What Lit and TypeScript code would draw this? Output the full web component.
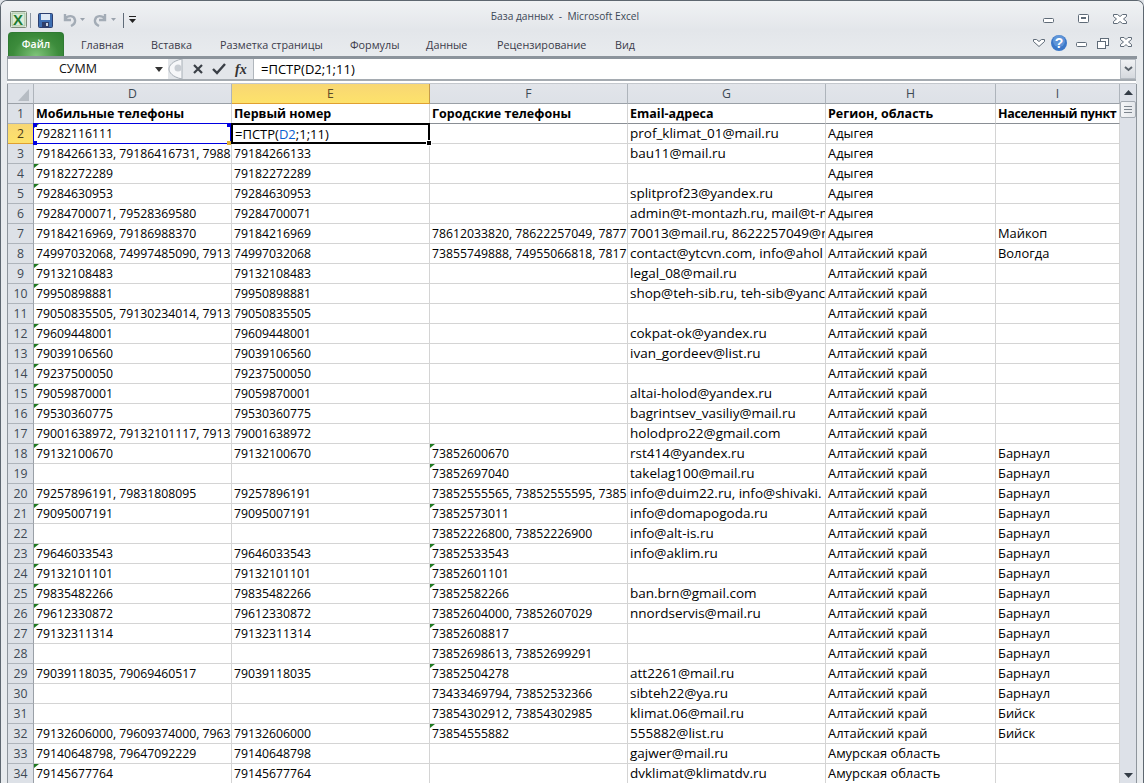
import { LitElement, html, css } from "lit";
import { customElement } from "lit/decorators.js";

type Row = { n: number; d?: string; e?: string; f?: string; g?: string; h?: string; i?: string; td?: boolean; tf?: boolean };
const A = "Адыгея", K = "Алтайский край", M = "Амурская область", B = "Барнаул";
const rows: Row[] = [
  { n: 2, d: "79282116111", td: true, g: "prof_klimat_01@mail.ru", h: A },
  { n: 3, d: "79184266133, 79186416731, 7988", e: "79184266133", g: "bau11@mail.ru", h: A },
  { n: 4, d: "79182272289", td: true, e: "79182272289", h: A },
  { n: 5, d: "79284630953", td: true, e: "79284630953", g: "splitprof23@yandex.ru", h: A },
  { n: 6, d: "79284700071, 79528369580", e: "79284700071", g: "admin@t-montazh.ru, mail@t-m", h: A },
  { n: 7, d: "79184216969, 79186988370", e: "79184216969", f: "78612033820, 78622257049, 7877", g: "70013@mail.ru, 8622257049@m", h: A, i: "Майкоп" },
  { n: 8, d: "74997032068, 74997485090, 7913", e: "74997032068", f: "73855749888, 74955066818, 7817", g: "contact@ytcvn.com, info@ahol", h: K, i: "Вологда" },
  { n: 9, d: "79132108483", td: true, e: "79132108483", g: "legal_08@mail.ru", h: K },
  { n: 10, d: "79950898881", td: true, e: "79950898881", g: "shop@teh-sib.ru, teh-sib@yanc", h: K },
  { n: 11, d: "79050835505, 79130234014, 7913", e: "79050835505", h: K },
  { n: 12, d: "79609448001", td: true, e: "79609448001", g: "cokpat-ok@yandex.ru", h: K },
  { n: 13, d: "79039106560", td: true, e: "79039106560", g: "ivan_gordeev@list.ru", h: K },
  { n: 14, d: "79237500050", td: true, e: "79237500050", h: K },
  { n: 15, d: "79059870001", td: true, e: "79059870001", g: "altai-holod@yandex.ru", h: K },
  { n: 16, d: "79530360775", td: true, e: "79530360775", g: "bagrintsev_vasiliy@mail.ru", h: K },
  { n: 17, d: "79001638972, 79132101117, 7913", e: "79001638972", g: "holodpro22@gmail.com", h: K },
  { n: 18, d: "79132100670", td: true, e: "79132100670", f: "73852600670", tf: true, g: "rst414@yandex.ru", h: K, i: B },
  { n: 19, f: "73852697040", tf: true, g: "takelag100@mail.ru", h: K, i: B },
  { n: 20, d: "79257896191, 79831808095", e: "79257896191", f: "73852555565, 73852555595, 7385", g: "info@duim22.ru, info@shivaki.", h: K, i: B },
  { n: 21, d: "79095007191", td: true, e: "79095007191", f: "73852573011", tf: true, g: "info@domapogoda.ru", h: K, i: B },
  { n: 22, f: "73852226800, 73852226900", g: "info@alt-is.ru", h: K, i: B },
  { n: 23, d: "79646033543", td: true, e: "79646033543", f: "73852533543", tf: true, g: "info@aklim.ru", h: K, i: B },
  { n: 24, d: "79132101101", td: true, e: "79132101101", f: "73852601101", tf: true, h: K, i: B },
  { n: 25, d: "79835482266", td: true, e: "79835482266", f: "73852582266", tf: true, g: "ban.brn@gmail.com", h: K, i: B },
  { n: 26, d: "79612330872", td: true, e: "79612330872", f: "73852604000, 73852607029", g: "nnordservis@mail.ru", h: K, i: B },
  { n: 27, d: "79132311314", td: true, e: "79132311314", f: "73852608817", tf: true, h: K, i: B },
  { n: 28, f: "73852698613, 73852699291", h: K, i: B },
  { n: 29, d: "79039118035, 79069460517", e: "79039118035", f: "73852504278", tf: true, g: "att2261@mail.ru", h: K, i: B },
  { n: 30, f: "73433469794, 73852532366", g: "sibteh22@ya.ru", h: K, i: B },
  { n: 31, f: "73854302912, 73854302985", g: "klimat.06@mail.ru", h: K, i: "Бийск" },
  { n: 32, d: "79132606000, 79609374000, 7963", e: "79132606000", f: "73854555882", tf: true, g: "555882@list.ru", h: K, i: "Бийск" },
  { n: 33, d: "79140648798, 79647092229", e: "79140648798", g: "gajwer@mail.ru", h: M },
  { n: 34, d: "79145677764", td: true, e: "79145677764", g: "dvklimat@klimatdv.ru", h: M },
];

const tabs = ["Главная", "Вставка", "Разметка страницы", "Формулы", "Данные", "Рецензирование", "Вид"];
const tabX = [80, 150, 219, 349, 425, 496, 614];
const grey = "#5f6b78";

@customElement("app-root")
class AppRoot extends LitElement {
  static styles = css`
    :host { display: block; width: 1144px; height: 783px; overflow: hidden; font-family: "Open Sans", sans-serif; color: #000; background: #dfe3e8; }
    .win { height: 783px; box-sizing: border-box; display: flex; flex-direction: column; border: 1px solid #5e6770; border-bottom: 0; border-radius: 7px 7px 0 0; background: #e8ebee; overflow: hidden; }
    .title { height: 29px; flex: none; display: flex; align-items: center; padding-left: 8px; position: relative; background: linear-gradient(#f0f2f4, #e3e6ea); }
    .title .t { position: absolute; left: 0; right: 14px; top: 8px; text-align: center; font-size: 10.2px; line-height: 15px; color: #3c4856; white-space: pre; }
    .qat { display: flex; align-items: center; position: relative; height: 24px; margin-top: 9px; }
    .sep { width: 1px; height: 15px; background: #8c97a3; flex: none; }
    .capsvg { position: absolute; left: 1030px; top: 0; }
    .tabs { height: 26px; flex: none; display: flex; align-items: flex-end; position: relative; padding-left: 7px; background: linear-gradient(#e3e6ea, #e8ebee); }
    .file { width: 56px; height: 24px; box-sizing: border-box; background: radial-gradient(ellipse at 50% 100%, #7fc47a, #3d8c3c 60%, #2f7f31); border: 1px solid #2f7a33; border-bottom: 0; border-radius: 4px 4px 0 0; color: #fff; font-weight: 600; font-size: 10.5px; line-height: 23px; text-align: center; }
    .tab { font-size: 10.8px; line-height: 23px; color: #3b3b4a; height: 23px; position: absolute; bottom: 0; white-space: nowrap; }
    .helpsvg { position: absolute; left: 1022px; top: 0; }
    .rib { height: 3px; flex: none; background: #8c949c; margin-left: 6px; margin-right: 6px; }
    .fbar { height: 20px; flex: none; display: flex; align-items: stretch; margin-left: 6px; margin-right: 7px; background: #dde1e6; border-left: 1px solid #a0a6ad; }
    .name { width: 160px; flex: none; background: #fff; position: relative; font-size: 12.5px; line-height: 20px; padding-left: 51px; box-sizing: border-box; color: #111; }
    .name svg { position: absolute; left: 147px; top: 8px; }
    .mid { width: 85px; flex: none; background: #e3e6ea; }
    .mid svg { display: block; }
    .finp { flex: 1; background: #fff; font-size: 13px; line-height: 20px; padding-left: 7px; border-left: 1px solid #b0b6bc; }
    .fdrop { width: 16px; box-sizing: border-box; border: 1px solid #b6bcc3; background: linear-gradient(#f0f2f4, #d5d9de); display: flex; align-items: center; justify-content: center; flex: none; }
    .gap { height: 5px; flex: none; margin-left: 6px; margin-right: 7px; background: #fff; border-top: 2px solid #a5abb1; border-bottom: 1px solid #c4c8cd; box-sizing: border-box; }
    .sheet { flex: 1; min-height: 0; display: flex; margin-left: 6px; margin-right: 6px; border-left: 1px solid #8e959c; border-right: 1px solid #8e959c; position: relative; }
    .grid { width: 1112px; flex: none; display: grid; grid-template-columns: 26px 198px 198px 198px 198px 170px 124px; grid-auto-rows: 20px; align-content: start; background: #fff; overflow: hidden; position: relative; font-size: 12.24px; }
    .c { border-right: 1px solid #d4d4d4; border-bottom: 1px solid #d4d4d4; box-sizing: border-box; overflow: hidden; white-space: nowrap; line-height: 20px; padding-left: 2px; position: relative; }
    .c.t { font-size: 12.9px; line-height: 19px; }
    .c.m { font-size: 13.5px; line-height: 19px; }
    .c.f { font-size: 13px; padding-left: 3px; }
    .c.b { font-weight: 700; font-size: 12.5px; border-bottom: 1px solid #8a8f95; }
    .c.b.n { letter-spacing: -0.35px; }
    .ch { background: linear-gradient(#e2e5ea, #dde1e7); border-right: 1px solid #aeb4bb; border-bottom: 1px solid #9aa0a7; box-sizing: border-box; text-align: center; line-height: 20px; color: #3d4954; font-size: 12.24px; }
    .ch.on { background: linear-gradient(#f8d774, #fde26b); border-bottom-color: #e0a030; border-right-color: #c59b4a; color: #5b4a28; }
    .corner { background: #dde1e7; }
    .corner svg { display: block; }
    .rh { background: #dde1e7; border-right: 1px solid #9aa0a7; border-bottom: 1px solid #aeb4bb; box-sizing: border-box; text-align: center; color: #3d4954; line-height: 20px; font-size: 12.24px; }
    .rh.on { background: linear-gradient(#f8d774, #fde26b); border-bottom-color: #e0a030; border-right-color: #e0a030; color: #4b3b18; }
    .tri { position: absolute; left: 0; top: 0; width: 0; height: 0; border-top: 4px solid #1f7a1f; border-right: 5px solid transparent; }
    .blue { color: #0b5fd0; }
    .sel { position: absolute; left: 223px; top: 39px; width: 199px; height: 21px; box-sizing: border-box; border: 2px solid #000; pointer-events: none; }
    .hand { position: absolute; width: 4px; height: 4px; background: #000; border: 1px solid #fff; right: -4px; bottom: -4px; }
    .rng { position: absolute; left: 25px; top: 39px; width: 198px; height: 21px; box-sizing: border-box; border: 1px solid #0000e0; pointer-events: none; }
    .rng i { position: absolute; width: 4px; height: 4px; background: #0000e0; }
    .rng i.y { background: #e0b030; }
    .scroll { flex: 1; background: #dde1e8; position: relative; display: flex; flex-direction: column; align-items: stretch; }
    .up { height: 17px; flex: none; display: flex; align-items: center; justify-content: center; }
    .thumb { height: 17px; flex: none; border: 1px solid #a4abb3; border-radius: 2px; background: linear-gradient(90deg, #f4f5f7, #e4e7eb); display: flex; align-items: center; justify-content: center; box-sizing: border-box; }
    .dn { position: absolute; bottom: 5px; left: 0; right: 0; display: flex; justify-content: center; line-height: 0; }
  `;

  render() {
    return html`
      <div class="win">
        <div class="title">
          <div class="t">База данных  -  Microsoft Excel</div>
          <div class="qat">
            <svg width="18" height="18" viewBox="0 0 18 18" style="margin:0 2px 0 1px">
              <rect x="0.5" y="0.5" width="16" height="16" rx="1" fill="#fff" stroke="#7a8a78"/>
              <rect x="2" y="2" width="13" height="13" fill="#dcecd8" stroke="#9cbc98"/>
              <text x="3" y="14" font-family="Liberation Sans" font-weight="700" font-size="15" fill="#1d7a2f">X</text>
            </svg>
            <div class="sep" style="margin-right:7px"></div>
            <svg width="15" height="15" viewBox="0 0 15 15" style="margin-right:8px">
              <rect x="0.5" y="0.5" width="14" height="14" rx="1" fill="#3e6fb3" stroke="#2d3f6f"/>
              <rect x="3" y="1" width="9" height="6" fill="#dfe9f5"/>
              <rect x="4" y="9" width="7" height="5" fill="#2f3f6a"/><rect x="8" y="10" width="2" height="3" fill="#cdd6e2"/>
            </svg>
            <svg width="16" height="14" viewBox="0 0 16 14"><path d="M4 1v6h6M4 6c3-4 9-4 10 1 .5 3-2 5-4 6" fill="none" stroke="#a3acb6" stroke-width="2.4"/></svg>
            <svg width="14" height="8" viewBox="0 0 14 8" style="margin:0 4px 0 -2px"><path d="M5 2h5L7.5 5z" fill="#9aa3ad"/></svg>
            <svg width="16" height="14" viewBox="0 0 16 14"><path d="M12 1v6H6M12 6C9 2 3 2 2 7c-.5 3 2 5 4 6" fill="none" stroke="#a3acb6" stroke-width="2.4"/></svg>
            <svg width="14" height="8" viewBox="0 0 14 8" style="margin-left:-3px"><path d="M5 2h5L7.5 5z" fill="#9aa3ad"/></svg>
            <div class="sep" style="margin:0 5px 0 3px;background:#5f6b78"></div>
            <svg width="7" height="8" viewBox="0 0 7 8"><path d="M0 0h7v1H0z" fill="#222"/><path d="M0 3h7L3.5 7z" fill="#222"/></svg>
          </div>
          <svg class="capsvg" width="113" height="29" viewBox="0 0 113 29">
            <rect x="12.5" y="17.5" width="10" height="4" rx="1" fill="#fff" stroke="${grey}"/>
            <rect x="47.5" y="13.5" width="10" height="8" rx="1" fill="#fff" stroke="${grey}"/><rect x="50" y="16" width="5" height="2" fill="${grey}"/>
            <path d="M82.5 13.5h4l2.5 2 2.5-2h4v2l-3 2.5 3 2.5v2h-4l-2.5-2-2.5 2h-4v-2l3-2.5-3-2.5z" fill="#fff" stroke="${grey}"/>
          </svg>
        </div>
        <div class="tabs">
          <div class="file">Файл</div>
          ${tabs.map((t, i) => html`<div class="tab" style="left:${tabX[i]}px">${t}</div>`)}
          <svg class="helpsvg" width="113" height="26" viewBox="0 0 113 26">
            <path d="M10.5 9.5h3l2.5 2 2.5-2h3v2l-5.5 5-5.5-5z" fill="#fff" stroke="${grey}"/>
            <circle cx="36" cy="13" r="8" fill="#3b78c9"/><circle cx="36" cy="11" r="6" fill="#78a9e2" opacity=".6"/>
            <text x="36" y="18" text-anchor="middle" font-family="Liberation Sans" font-weight="700" font-size="14" fill="#fff">?</text>
            <rect x="53.5" y="12.5" width="10" height="4" rx="1" fill="#fff" stroke="${grey}"/>
            <rect x="77.5" y="8.5" width="8" height="7" fill="#fff" stroke="${grey}"/><rect x="74.5" y="11.5" width="8" height="7" fill="#fff" stroke="${grey}"/>
            <path d="M97.5 7.5h3.5l2 2 2-2h3.5v2l-3 2.5 3 2.5v2h-3.5l-2-2-2 2h-3.5v-2l3-2.5-3-2.5z" fill="#fff" stroke="${grey}"/>
          </svg>
        </div>
        <div class="rib"></div>
        <div class="fbar">
          <div class="name">СУММ
            <svg width="9" height="5"><path d="M0 0h8L4 5z" fill="#333"/></svg>
          </div>
          <div class="mid">
            <svg width="85" height="20" viewBox="0 0 85 20">
              <path d="M14 0C4 2 1 7 1 10s3 8 13 10z" fill="#f6f7f9" stroke="#a8afb6"/>
              <circle cx="10" cy="9" r="3.5" fill="#c8cdd3"/>
              <path d="M26 6l8 8M34 6l-8 8" stroke="#3a3f46" stroke-width="2.2"/>
              <path d="M45 10l4 4 8-9" stroke="#3a3f46" stroke-width="2.4" fill="none"/>
              <text x="67" y="15" font-family="Liberation Serif" font-style="italic" font-weight="700" font-size="14" fill="#333">fx</text>
            </svg>
          </div>
          <div class="finp">=ПСТР(D2;1;11)</div>
          <div class="fdrop"><svg width="9" height="6"><path d="M1 1l3.5 3L8 1" fill="none" stroke="#5a626a" stroke-width="2"/></svg></div>
        </div>
        <div class="gap"></div>
        <div class="sheet">
          <div class="grid">
            <div class="ch corner"><svg width="22" height="18"><path d="M21 5v12H10z" fill="#b6bcc3"/></svg></div>
            ${["D", "E", "F", "G", "H", "I"].map((c) => html`<div class="ch ${c === "E" ? "on" : ""}">${c}</div>`)}
            <div class="rh">1</div>
            <div class="c b">Мобильные телефоны</div><div class="c b">Первый номер</div><div class="c b">Городские телефоны</div>
            <div class="c b">Email-адреса</div><div class="c b">Регион, область</div><div class="c b n">Населенный пункт</div>
            ${rows.map((r) => html`
              <div class="rh ${r.n === 2 ? "on" : ""}">${r.n}</div>
              <div class="c">${r.td ? html`<span class="tri"></span>` : ""}${r.d ?? ""}</div>
              ${r.n === 2
                ? html`<div class="c f">=ПСТР(<span class="blue">D2</span>;1;11)</div>`
                : html`<div class="c">${r.e ?? ""}</div>`}
              <div class="c">${r.tf ? html`<span class="tri"></span>` : ""}${r.f ?? ""}</div>
              <div class="c m">${r.g ?? ""}</div>
              <div class="c t">${r.h ?? ""}</div>
              <div class="c t">${r.i ?? ""}</div>
            `)}
            <div class="rng"><i style="left:-1px;top:-1px"></i><i style="right:-1px;top:-1px"></i><i style="left:-1px;bottom:-2px"></i><i class="y" style="right:-1px;bottom:-2px"></i></div>
            <div class="sel"><span class="hand"></span></div>
          </div>
          <div class="scroll">
            <div class="up"><svg width="9" height="5"><path d="M4.5 0L9 5H0z" fill="#333c46"/></svg></div>
            <div class="thumb"><svg width="8" height="7"><path d="M0 .5h8M0 3.5h8M0 6.5h8" stroke="#7d858e"/></svg></div>
            <div class="dn"><svg width="9" height="5"><path d="M0 0h9L4.5 5z" fill="#333c46"/></svg></div>
          </div>
        </div>
      </div>
    `;
  }
}
